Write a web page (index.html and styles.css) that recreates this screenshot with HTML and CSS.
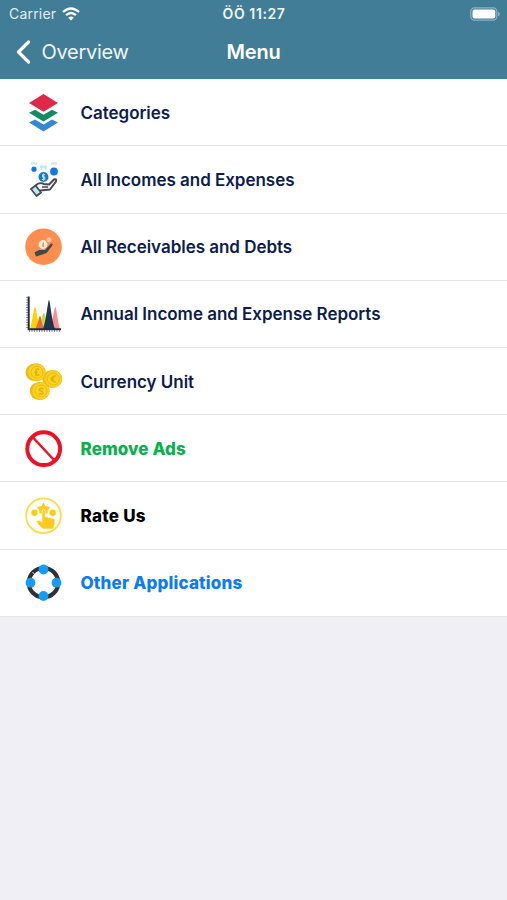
FILE: index.html
```html
<!DOCTYPE html>
<html lang="en">
<head>
    <meta charset="utf-8">
    <title>Menu</title>
    <link rel="stylesheet" href="styles.css">
</head>
<body>
    <header class="header">
        <div class="status-bar">
            <div class="carrier">
                <span>Carrier</span>
                <svg class="wifi" viewBox="0 0 18 14">
                    <path d="M1 5 Q9 -2 17 5" />
                    <path d="M4 8.2 Q9 3.8 14 8.2" />
                    <path class="wifi-dot" d="M6.2 10.7 Q9 8.4 11.8 10.7 L9 13.6Z" />
                </svg>
            </div>
            <div class="time">ÖÖ 11:27</div>
            <svg class="battery" viewBox="0 0 30 14">
                <rect class="battery-case" x=".8" y=".8" width="26" height="12.4" rx="3.6" />
                <rect x="2.5" y="2.5" width="22.8" height="9" rx="2" fill="#fff" />
                <path d="M28 4.8 Q30 5.5 30 7 Q30 8.5 28 9.2Z" fill="#8db3c3" />
            </svg>
        </div>
        <nav class="nav-bar">
            <a class="back">
                <svg class="chevron" viewBox="0 0 15 24"><path d="M12.5 2 L2.5 12 L12.5 22" /></svg>
                <span>Overview</span>
            </a>
            <h1 class="title">Menu</h1>
        </nav>
    </header>

    <ul class="menu">
        <li class="row">
            <svg class="icon" viewBox="0 0 38 38">
                <path d="M4 28.5 L10 25.5 L18.5 30.5 L27 25.5 L33 28.5 L18.5 37.5Z" fill="#3489d0" />
                <path d="M4 18.7 L10 15.8 L18.5 20.7 L27 15.8 L33 18.7 L18.5 27.6Z" fill="#168a63" />
                <path d="M18.5 0 L33 9 L18.5 17.8 L4 9Z" fill="#df2848" />
            </svg>
            <span class="label">Categories</span>
        </li>
        <li class="row">
            <svg class="icon" viewBox="0 0 38 38">
                <path d="M6 2.5 H12 M15 6 H22 M26 2.5 H32 M16.5 4 V9 M20.5 4 V9" stroke="#c2e7fb" stroke-width="1.8" />
                <circle cx="9" cy="8.2" r="2.6" fill="#1678dd" />
                <circle cx="29" cy="10.5" r="3.9" fill="#1678dd" />
                <circle cx="18.5" cy="16" r="5" fill="#1678dd" />
                <path d="M20 13.7 H17.5 V16 H19.8 V18.5 H17 M18.6 12.5 V19.7" fill="none" stroke="#c9e9ff" />
                <path d="M10.5 25 C13 21.5 17 22 19 23 L24 23.5 L29 18.5 Q32 17.5 31 20.5 L25 28.5 L15.5 29.5 L14 31" fill="#f5f5f5" stroke="#484a50" stroke-width="2" stroke-linejoin="round" />
                <path d="M17 26 H23" stroke="#484a50" stroke-width="1.5" />
                <path d="M6 28 L10.5 24.5 L16 31.5 L11.5 35Z" fill="#bce7fb" stroke="#484a50" stroke-width="1.7" />
            </svg>
            <span class="label">All Incomes and Expenses</span>
        </li>
        <li class="row">
            <svg class="icon" viewBox="0 0 38 38">
                <circle cx="18.5" cy="18.7" r="18.3" fill="#fd8e50" />
                <circle cx="18" cy="16.5" r="4.4" fill="#fff0df" />
                <circle cx="24" cy="11.7" r="2.5" fill="#ffc8a2" />
                <path d="M18.8 13.8 L17.4 15 V19 H19.2Z" fill="#fd8e50" />
                <path d="M9.5 24.5 L14 22 L20 22 L26 15.5 Q28.5 15 27 18 L21.5 25 L16 27 L11 28.5Z" fill="#45484b" />
            </svg>
            <span class="label">All Receivables and Debts</span>
        </li>
        <li class="row">
            <svg class="icon" viewBox="0 0 38 38">
                <path d="M13 34 C16 29 17 18 19 18 C20.5 18 21 28 23 34Z" fill="#bfe33c" />
                <path d="M5 34 C7.5 26 8.8 12 10 12 C11.2 12 12.5 26 15 34Z" fill="#ffd400" />
                <path d="M10.5 34 C13 29 14 21 15 21 C16 21 17 29 19 34Z" fill="#e9683d" />
                <path d="M25 34 C28 26 29.2 12 30.3 12 C31.4 12 32.5 26 35 34Z" fill="#f98f8f" />
                <path d="M18 34 C21.5 24 23 5 24 5 C25 5 26.5 24 30 34Z" fill="#20344f" />
                <path d="M3.7 1.5 V34.3 H36" fill="none" stroke="#202d42" stroke-width="2" />
                <path d="M2 2 V34 M4 36 H36" fill="none" stroke="#202d42" stroke-width="1" stroke-dasharray="1 1.5" />
            </svg>
            <span class="label">Annual Income and Expense Reports</span>
        </li>
        <li class="row">
            <svg class="icon" viewBox="0 0 38 38">
                <g fill="#edb916">
                    <circle cx="9.3" cy="9.3" r="8.7" />
                    <circle cx="26" cy="16" r="8.7" />
                    <circle cx="13.5" cy="28" r="8.7" />
                </g>
                <g fill="#fbd51f" stroke="#f3c318" stroke-width="1">
                    <circle cx="11.8" cy="9.3" r="8.5" />
                    <circle cx="28.3" cy="16" r="8.5" />
                    <circle cx="15.8" cy="28" r="8.5" />
                </g>
                <g fill="none" stroke="#e3ad16" stroke-width="1.5">
                    <circle cx="12" cy="9.3" r="6" stroke-width=".7" />
                    <circle cx="28.3" cy="16" r="6" stroke-width=".7" />
                    <circle cx="16" cy="28" r="6" stroke-width=".7" />
                    <path d="M14 6.3 Q11 5 11 8 V12 H14.5 M9.5 9.3 H13" />
                    <path d="M31 13 Q27 12.5 27 16 Q27 19.5 31 19 M25.5 15 H29.5 M25.5 17 H29.5" />
                    <path d="M18.5 25.5 H15 Q13 27.5 16 28 Q19 29 17 31 H13.5" />
                </g>
            </svg>
            <span class="label">Currency Unit</span>
        </li>
        <li class="row">
            <svg class="icon" viewBox="0 0 38 38">
                <g fill="none" stroke="#ed1027">
                    <circle cx="18.7" cy="18.7" r="16.4" stroke-width="4" />
                    <path d="M7.5 7 L29.5 30.5" stroke-width="2.5" />
                </g>
            </svg>
            <span class="label green">Remove Ads</span>
        </li>
        <li class="row">
            <svg class="icon" viewBox="0 0 38 38">
                <circle cx="18.5" cy="18.7" r="17.4" fill="#fffef8" stroke="#fbdc4d" stroke-width="1.8" />
                <g fill="#facb1d">
                    <path d="M18.5 5.8 L20.5 9 L25.3 10.3 L22.8 13 L22.5 16.5 H14.5 L14.2 13 L11.7 10.3 L16.5 9Z" />
                    <circle cx="9.5" cy="15.7" r="3.2" />
                    <circle cx="27.7" cy="15.7" r="3.2" />
                    <path d="M17 13.5 Q18.7 11.7 20.2 13.5 V20 Q22 19 23.2 20.5 Q25 19.7 26 21.3 Q29.8 20.8 29.8 23.5 V27 L28.3 32 H18 L12 26 Q11 22.7 14 23.2 L17 25Z" stroke="#fff8d8" stroke-width=".7" />
                </g>
            </svg>
            <span class="label black">Rate Us</span>
        </li>
        <li class="row">
            <svg class="icon" viewBox="0 0 38 38">
                <circle cx="18.5" cy="18.7" r="14.7" fill="none" stroke="#303136" stroke-width="4.2" />
                <path d="M7.5 8 L10.5 11.5" stroke="#fff" stroke-width=".8" />
                <g fill="#159cf8">
                    <circle cx="18.5" cy="5.5" r="4.9" />
                    <circle cx="18.5" cy="32" r="4.9" />
                    <circle cx="5.5" cy="18.7" r="4.9" />
                    <circle cx="31.5" cy="18.7" r="4.9" />
                </g>
            </svg>
            <span class="label blue">Other Applications</span>
        </li>
    </ul>
</body>
</html>
```
FILE: styles.css
```css
* {
    box-sizing: border-box;
}
body {
    margin: 0;
    min-height: 100vh;
    background-color: #f0eff5;
    font-family: Inter, "Liberation Sans", sans-serif;
}
.header {
    height: 79.3px;
    background-color: #417d96;
    color: #fff;
}
.status-bar {
    display: grid;
    grid-template-columns: 1fr auto 1fr;
    align-items: center;
    height: 27px;
    padding: 0 7px 0 9px;
    font-size: 14px;
}
.carrier {
    display: flex;
    align-items: center;
    gap: 6px;
    color: #e1edf2;
    letter-spacing: 0.2px;
}
.wifi {
    width: 18px;
    height: 14px;
    fill: none;
    stroke: #fff;
    stroke-width: 2.3;
}
.wifi .wifi-dot {
    fill: #fff;
    stroke: none;
}
.time {
    padding-right: 1px;
    font-weight: 600;
    letter-spacing: 0.6px;
    color: #eff6f8;
}
.battery {
    justify-self: end;
    width: 30px;
    height: 14px;
}
.battery-case {
    fill: none;
    stroke: #8db3c3;
    stroke-width: 1.2;
}
.nav-bar {
    display: grid;
    grid-template-columns: 1fr auto 1fr;
    align-items: center;
    height: 50px;
    padding: 0 16px;
}
.back {
    display: flex;
    align-items: center;
    gap: 10.5px;
    font-size: 20px;
    letter-spacing: -0.3px;
    color: #eff6f8;
}
.chevron {
    width: 15px;
    height: 24px;
    fill: none;
    stroke: #fff;
    stroke-width: 3.2;
    stroke-linecap: round;
    stroke-linejoin: round;
}
.title {
    margin: 0;
    font-size: 20px;
    font-weight: 600;
    letter-spacing: -0.2px;
}
.menu {
    margin: 0;
    padding: 0;
    list-style: none;
    background-color: #fff;
}
.row {
    display: flex;
    align-items: center;
    gap: 17.5px;
    height: 67.2px;
    padding: 0.8px 0 0 25px;
    border-bottom: 1px solid #e5e5e8;
}
.icon {
    flex: none;
    width: 38px;
    height: 38px;
}
.label {
    font-size: 17px;
    font-weight: 600;
    letter-spacing: -0.03px;
    color: #0c1c4d;
}
.green {
    color: #0baf4b;
    font-weight: 800;
    letter-spacing: 0.08px;
}
.black {
    color: #000;
    font-weight: 800;
    letter-spacing: 0.25px;
}
.blue {
    color: #087bf5;
    font-weight: 800;
    letter-spacing: 0.18px;
}
```
